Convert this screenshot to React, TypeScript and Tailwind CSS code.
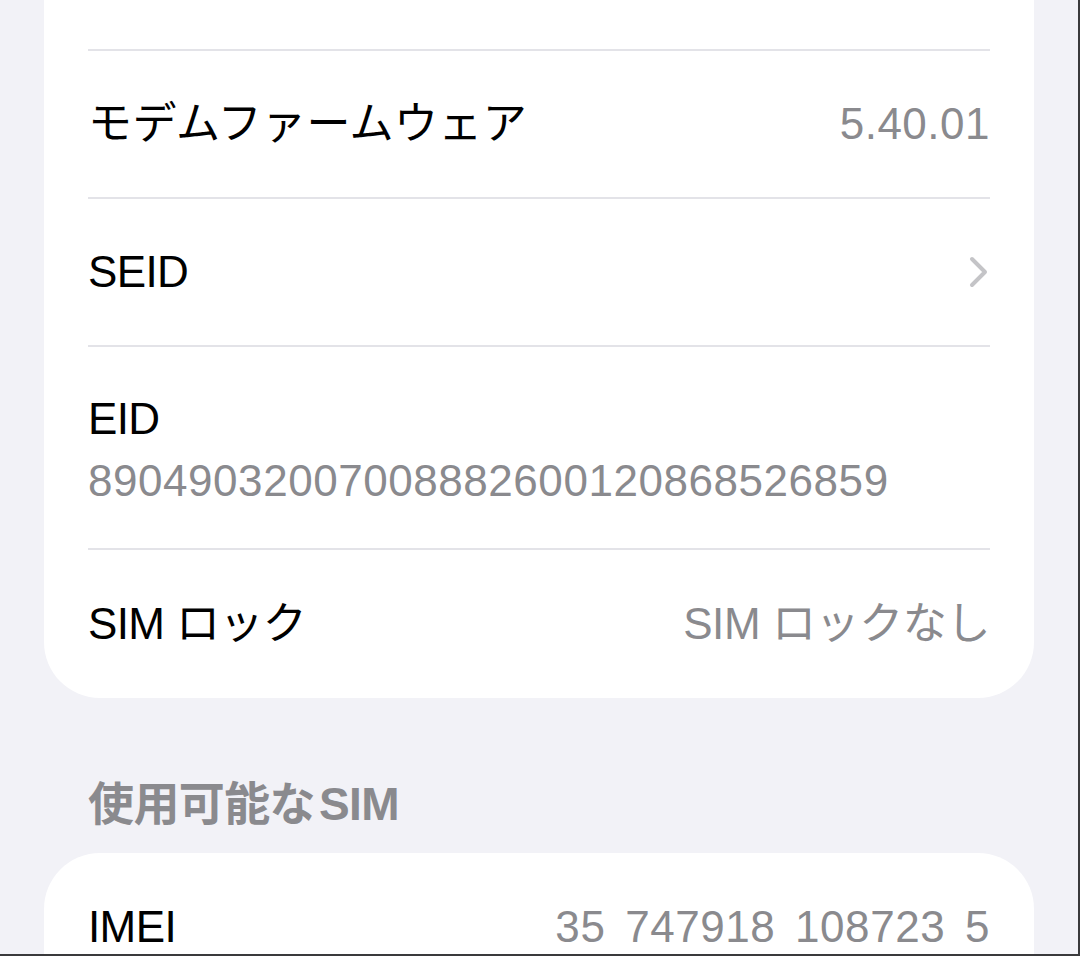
import React from 'react';

type Row = {
  label: string;
  value?: string;
  sub?: string;
  chevron?: boolean;
  wide?: boolean;
  numeric?: boolean;
};

const rows: Row[] = [
  { label: 'モデムファームウェア', value: '5.40.01', wide: true, numeric: true },
  { label: 'SEID', chevron: true },
  { label: 'EID', sub: '89049032007008882600120868526859' },
  { label: 'SIM ロック', value: 'SIM ロックなし' },
];

const Chevron = () => (
  <svg width="22" height="34" viewBox="0 0 22 34" fill="none">
    <path d="M4 4 L17 17 L4 30" stroke="#c4c4c7" strokeWidth="4" strokeLinecap="round" strokeLinejoin="round" />
  </svg>
);

const SettingsRow: React.FC<{ row: Row; last?: boolean }> = ({ row, last }) => {
  if (row.sub) {
    return (
      <div className={`flex h-[203px] flex-col justify-center ${last ? '' : 'border-b-2 border-[#e3e3e8]'}`}>
        <div className="pt-[4px] text-[44px] leading-[56px] tracking-[-0.6px] text-black">{row.label}</div>
        <div className="mt-[6px] text-[44px] leading-[56px] tracking-[0.55px] text-[#8a8a8e]">{row.sub}</div>
      </div>
    );
  }
  return (
    <div className={`flex h-[148px] items-center justify-between ${last ? '' : 'border-b-2 border-[#e3e3e8]'}`}>
      <span className={`text-[44px] text-black ${row.wide ? 'tracking-[0.4px]' : 'tracking-[-0.6px]'}`}>{row.label}</span>
      {row.value && (
        <span className={`text-[44px] text-[#8a8a8e] ${row.numeric ? 'tracking-[0.5px]' : 'tracking-[-0.4px]'}`}>
          {row.value}
        </span>
      )}
      {row.chevron && <Chevron />}
    </div>
  );
};

export default function App() {
  return (
    <div
      className="h-[956px] w-[1080px] overflow-hidden border-r-2 border-b-2 border-[#3a3a3c] bg-[#f2f2f7]"
      style={{ fontFamily: '"Liberation Sans", "Noto Sans CJK JP", sans-serif' }}
    >
      <div className="mx-[44px] rounded-b-[56px] bg-white px-[44px]">
        <div className="h-[51px] border-b-2 border-[#e3e3e8]" />
        {rows.map((r, i) => (
          <SettingsRow key={r.label} row={r} last={i === rows.length - 1} />
        ))}
      </div>

      <div className="flex h-[155px] items-end px-[88px] pb-[14px]">
        <span className="text-[46px] font-bold tracking-[-0.6px] text-[#8a8a8e]">
          使用可能な<span className="ml-[4px]">SIM</span>
        </span>
      </div>

      <div className="mx-[44px] rounded-t-[56px] bg-white px-[44px]">
        <div className="flex h-[148px] items-center justify-between">
          <span className="text-[44px] tracking-[-0.6px] text-black">IMEI</span>
          <span className="text-[44px] tracking-[0.55px] [word-spacing:7px] text-[#8a8a8e]">35 747918 108723 5</span>
        </div>
      </div>
    </div>
  );
}
